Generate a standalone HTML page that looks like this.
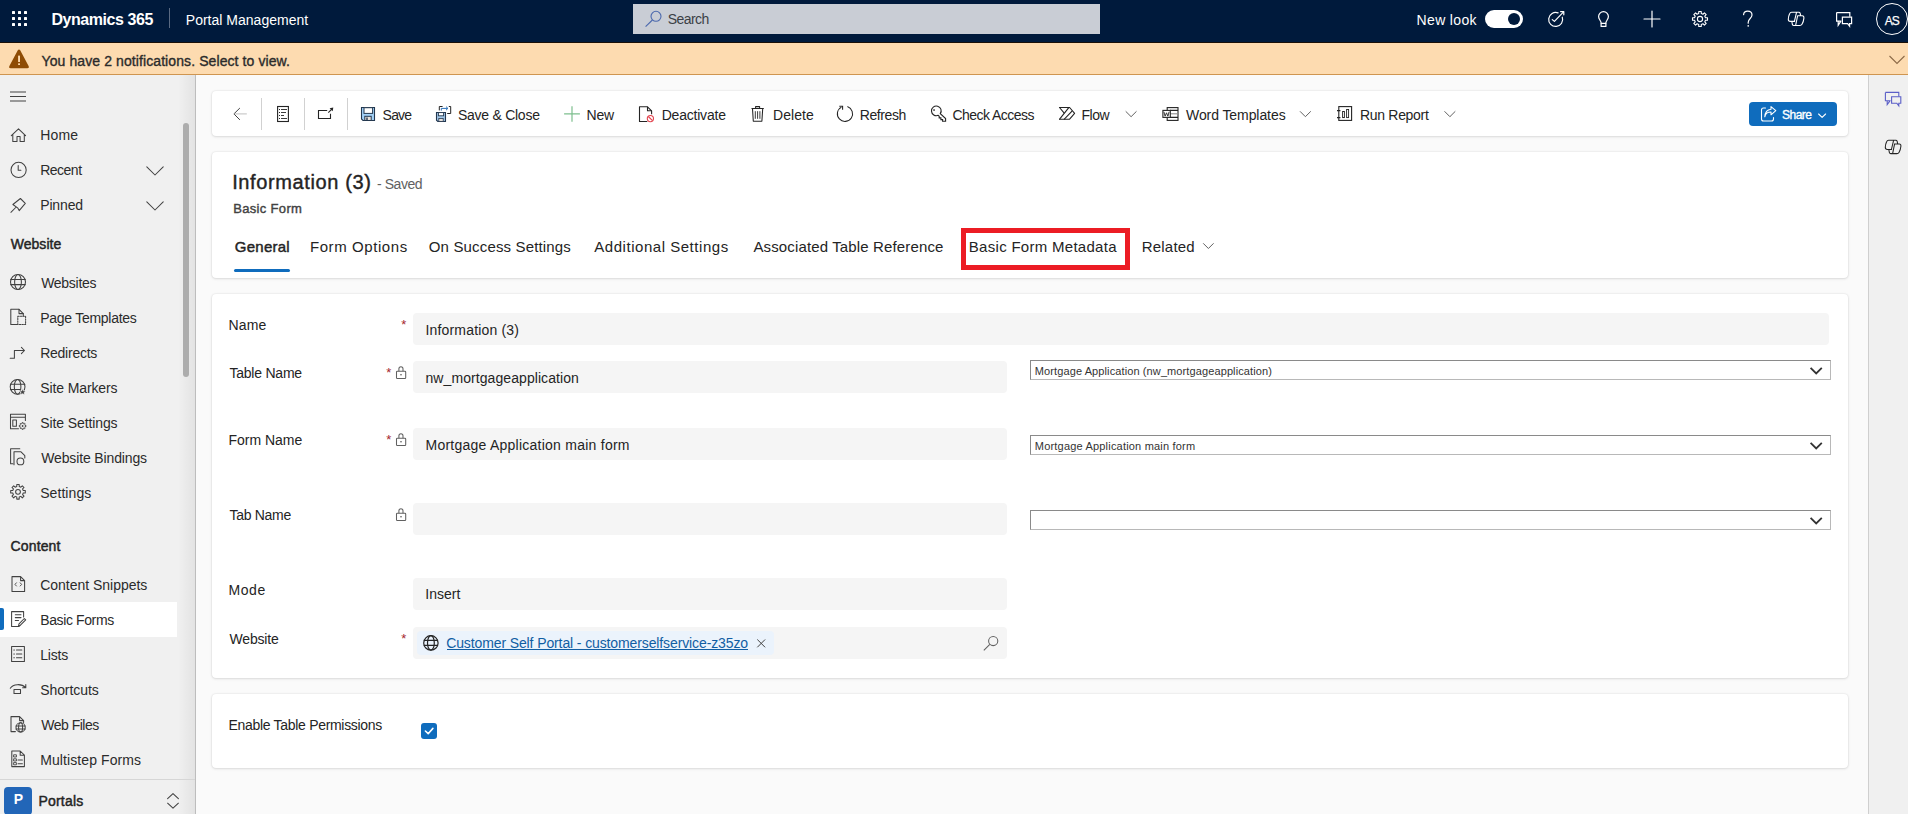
<!DOCTYPE html>
<html><head><meta charset="utf-8"><title>Portal Management</title>
<style>
html,body{margin:0;padding:0;}
body{width:1908px;height:814px;overflow:hidden;position:relative;background:#fafafa;font-family:"Liberation Sans",sans-serif;}
.t{position:absolute;white-space:nowrap;line-height:1;font-family:"Liberation Sans",sans-serif;}
.b{position:absolute;box-sizing:border-box;}
#hdr{left:0;top:0;width:1908px;height:42px;background:#001a3c;}
#hdrline{left:0;top:42px;width:1908px;height:1px;background:#1a0f08;}
#notif{left:0;top:43px;width:1908px;height:32px;background:#fddbb0;border-bottom:1px solid #cf9550;}
#side{left:0;top:75px;width:196px;height:739px;background:#f0f0f0;border-right:1px solid #bdbdbd;}
#sideshadow{left:178px;top:75px;width:17px;height:739px;background:linear-gradient(to right,rgba(0,0,0,0),rgba(0,0,0,0.055));}
#rpanel{left:1868px;top:75px;width:40px;height:739px;background:#f0f0f0;border-left:1px solid #cfcfcf;}
.card{position:absolute;left:212px;width:1636px;background:#fff;border-radius:4px;box-shadow:0 0 2px rgba(0,0,0,0.12),0 1px 3px rgba(0,0,0,0.10);}
.inp{position:absolute;left:413px;height:32px;background:#f5f5f5;border-radius:4px;}
.sel{position:absolute;left:1030px;width:801px;height:20px;background:#fff;border:1px solid #8a8a8a;border-bottom-color:#b8b8b8;border-right-color:#b8b8b8;box-sizing:border-box;}

</style></head>
<body>
<div id="hdr" class="b"></div>
<div class="b" style="left:169px;top:8px;width:1px;height:20px;background:#5a6a82;"></div>
<div class="b" style="left:633px;top:4px;width:467px;height:30px;background:#c9cdd5;"></div>
<div class="b" style="left:1485px;top:10px;width:38px;height:18px;border-radius:9px;background:#fff;"></div>
<div class="b" style="left:1508px;top:13px;width:12px;height:12px;border-radius:6px;background:#001a3c;"></div>
<div class="b" style="left:1876px;top:3px;width:32px;height:32px;border-radius:16px;border:1px solid #fff;"></div>

<div id="notif" class="b"></div>
<div id="hdrline" class="b"></div>

<div id="side" class="b"></div>
<div id="sideshadow" class="b"></div>
<div class="b" style="left:183px;top:123px;width:6px;height:254px;border-radius:3px;background:#adadad;"></div>
<div class="b" style="left:0;top:602px;width:177px;height:35px;background:#fff;"></div>
<div class="b" style="left:0;top:608px;width:4px;height:22px;border-radius:0 2px 2px 0;background:#0f6cbd;"></div>
<div class="b" style="left:0;top:779px;width:195px;height:1px;background:#d6d6d6;"></div>
<div class="b" style="left:4px;top:787px;width:28px;height:28px;border-radius:4px;background:#2266b8;"></div>

<div id="rpanel" class="b"></div>

<div class="card" style="top:91px;height:45px;"></div>
<div class="card" style="top:152px;height:126px;"></div>
<div class="card" style="top:294px;height:384px;"></div>
<div class="card" style="top:694px;height:74px;"></div>

<div class="b" style="left:1749px;top:102px;width:88px;height:24px;border-radius:4px;background:#0f6cbd;"></div>
<div class="b" style="left:234px;top:269px;width:56px;height:3px;border-radius:2px;background:#0f6cbd;"></div>
<div class="b" style="left:961px;top:228px;width:169px;height:42px;border:5px solid #ec1c24;"></div>

<div class="inp" style="top:313px;width:1416px;"></div>
<div class="inp" style="top:361px;width:594px;"></div>
<div class="inp" style="top:428px;width:594px;"></div>
<div class="inp" style="top:503px;width:594px;"></div>
<div class="inp" style="top:578px;width:594px;"></div>
<div class="inp" style="top:627px;width:594px;"></div>
<div class="b" style="left:417px;top:631px;width:357px;height:24px;border-radius:4px;background:#ebf3fc;"></div>
<div class="sel" style="top:360px;"></div>
<div class="sel" style="top:435px;"></div>
<div class="sel" style="top:510px;"></div>
<div class="b" style="left:447px;top:649px;width:301px;height:1px;background:#115ea3;"></div>
<div class="b" style="left:421px;top:723px;width:16px;height:16px;border-radius:3px;background:#0f6cbd;"></div>

<svg class="b" style="left:0;top:0" width="1908" height="814" viewBox="0 0 1908 814" fill="none">
<!-- waffle -->
<g fill="#fff"><rect x="12" y="11" width="3" height="3" rx="0.6"/><rect x="18" y="11" width="3" height="3" rx="0.6"/><rect x="24" y="11" width="3" height="3" rx="0.6"/><rect x="12" y="17" width="3" height="3" rx="0.6"/><rect x="18" y="17" width="3" height="3" rx="0.6"/><rect x="24" y="17" width="3" height="3" rx="0.6"/><rect x="12" y="23" width="3" height="3" rx="0.6"/><rect x="18" y="23" width="3" height="3" rx="0.6"/><rect x="24" y="23" width="3" height="3" rx="0.6"/></g>
<!-- search icon -->
<g stroke="#4b68ad" stroke-width="1.1"><circle cx="656" cy="16.3" r="5"/><path d="M652.4 20 L645.6 26.6"/></g>
<!-- header icons -->
<g stroke="#fff" stroke-width="1.2" stroke-linecap="round" stroke-linejoin="round">
<path d="M1562.3 17.2 A7 7 0 1 1 1558.1 12.9"/>
<path d="M1552.3 19.6 L1554.4 21.4 L1563.3 12.2"/>
<path d="M1560.6 11.6 L1563.8 11.6 L1563.8 14.8" />
<path d="M1598.6 16.6 A4.9 4.9 0 0 1 1608.4 16.6 C1608.4 19.4 1606.2 20.6 1605.9 22.6 L1605.9 26.4 L1601.1 26.4 L1601.1 22.6 C1600.8 20.6 1598.6 19.4 1598.6 16.6 Z"/>
<path d="M1601.3 23.4 L1605.7 23.4"/>
<path d="M1652 11 L1652 27 M1644 19 L1660 19"/>
<path d="M1743.6 14.6 C1743.8 12.4 1745.6 11.2 1747.7 11.2 C1750.1 11.2 1752 12.8 1752 15.1 C1752 18.4 1748.2 18.6 1748.2 22.4 L1748.2 23.2"/>
</g>
<circle cx="1748.2" cy="25.9" r="0.8" fill="#fff"/>
<g stroke="#fff" stroke-width="1.1" stroke-linejoin="round">
<path d="M1698.75 11.50 L1701.25 11.50 L1701.26 13.54 L1702.96 14.25 L1704.42 12.82 L1706.18 14.58 L1704.75 16.04 L1705.46 17.74 L1707.50 17.75 L1707.50 20.25 L1705.46 20.26 L1704.75 21.96 L1706.18 23.42 L1704.42 25.18 L1702.96 23.75 L1701.26 24.46 L1701.25 26.50 L1698.75 26.50 L1698.74 24.46 L1697.04 23.75 L1695.58 25.18 L1693.82 23.42 L1695.25 21.96 L1694.54 20.26 L1692.50 20.25 L1692.50 17.75 L1694.54 17.74 L1695.25 16.04 L1693.82 14.58 L1695.58 12.82 L1697.04 14.25 L1698.74 13.54 Z"/>
<circle cx="1700" cy="19" r="2.6"/>
</g>
<g stroke="#fff" stroke-width="1.1" fill="none" stroke-linejoin="round" stroke-linecap="round" transform="translate(-97 -128.1)"><use href="#copi"/></g>
<g stroke="#fff" stroke-width="1.2" stroke-linejoin="miter">
<path d="M1836.6 12.6 L1849.8 12.6 L1849.8 16.8 M1841.4 21.2 L1836.6 21.2 L1836.6 12.6 M1838.2 21.2 L1838.2 25.2 L1840.6 21.6"/>
<path d="M1842.4 17.2 L1851.6 17.2 L1851.6 23.6 L1849.6 23.6 L1849.6 26.2 L1847.6 23.6 L1842.4 23.6 Z"/>
</g>
<!-- notif warning -->
<path d="M17.8 50.2 C18.4 49.2 19.6 49.2 20.2 50.2 L28.6 65.9 C29.3 67.2 28.7 68.2 27.3 68.2 L10.7 68.2 C9.3 68.2 8.7 67.2 9.4 65.9 Z" fill="#8e4c05"/>
<rect x="18.1" y="55.6" width="1.9" height="6.4" rx="0.6" fill="#fddbb0"/>
<rect x="18.1" y="63.2" width="1.9" height="1.9" rx="0.6" fill="#fddbb0"/>
<path d="M1889.5 56 L1897 63.5 L1904.5 56" stroke="#8c6a48" stroke-width="1.1"/>

<!-- ===== command bar ===== -->
<g stroke="#424242" stroke-width="1" stroke-linecap="round" stroke-linejoin="round">
<path d="M239.6 108.3 L233.9 113.9 L239.6 119.6"/>
</g>
<path d="M234.5 113.9 L246.8 113.9" stroke="#c4c4c4" stroke-width="1.1"/>
<g fill="#d1d1d1"><rect x="261" y="98" width="1" height="32"/><rect x="304" y="98" width="1" height="32"/><rect x="347" y="98" width="1" height="32"/></g>
<g stroke="#242424" stroke-width="1.1" fill="none">
<rect x="277.6" y="106.5" width="10.8" height="15"/>
<path d="M281 109.5 L287 109.5 M281 112.5 L286 112.5 M281 115.5 L284 115.5 M281 118.5 L287 118.5" stroke-width="0.9"/>
</g>
<g fill="#242424"><rect x="279" y="109" width="1" height="1"/><rect x="279" y="112" width="1" height="1"/><rect x="279" y="115" width="1" height="1"/><rect x="279" y="118" width="1" height="1"/></g>
<g stroke="#242424" stroke-width="1.1" fill="none" stroke-linejoin="miter">
<path d="M327.2 110.5 L318.5 110.5 L318.5 118.5 L330.5 118.5 L330.5 113.8"/>
<path d="M328.3 112.6 L332.3 108.6"/>
</g>
<path d="M329.6 108.2 L333.3 107.6 L332.7 111.3 Z" fill="#242424"/>
<!-- save -->
<path d="M361.5 107.5 L374.5 107.5 L374.5 120.5 L363 120.5 L361.5 119 Z" fill="#a3d1f7" stroke="#24384f" stroke-width="1.1"/>
<rect x="364" y="107.7" width="8.6" height="5.7" fill="#fff" stroke="#24384f" stroke-width="1"/>
<rect x="364.8" y="116.3" width="6.4" height="4.2" fill="#e8e2dc" stroke="#24384f" stroke-width="1"/>
<rect x="366.3" y="117.5" width="1.4" height="3" fill="#24384f"/>
<!-- save & close -->
<path d="M436.5 112.5 L445.5 112.5 L445.5 121.5 L437.8 121.5 L436.5 120.2 Z" fill="#a3c6e6" stroke="#24384f" stroke-width="1.1"/>
<rect x="438.4" y="112.6" width="5.2" height="3.2" fill="#fff" stroke="#24384f" stroke-width="0.9"/>
<rect x="438.8" y="118.4" width="4.4" height="3" fill="#e8e2dc" stroke="#24384f" stroke-width="0.8"/>
<g stroke="#242424" stroke-width="1" fill="none"><path d="M439.3 110.4 L439.3 106.5 L442.6 106.5 M448.8 106.5 L450.7 106.5 L450.7 113.5 L447.2 113.5"/></g>
<g stroke="#2a6fb8" stroke-width="1" fill="none"><path d="M441.3 110.6 L441.3 108.4 L447.6 108.4"/><path d="M446 106.6 L447.9 108.4 L446 110.2"/></g>
<!-- new plus -->
<path d="M572 106.3 L572 121.8 M564.1 113.9 L579.9 113.9" stroke="#7dbf8e" stroke-width="1.2"/>
<!-- deactivate -->
<g stroke="#242424" stroke-width="1.1" fill="none" stroke-linejoin="round">
<path d="M647.3 121.5 L639.5 121.5 L639.5 106.8 L647.5 106.8 L651.6 110.8 L651.6 114.2"/>
<path d="M647.5 106.8 L647.5 110.8 L651.6 110.8"/>
</g>
<circle cx="650.4" cy="118.6" r="3.1" stroke="#e3434e" stroke-width="1.1" fill="#fff"/>
<path d="M648.3 116.5 L652.5 120.7" stroke="#e3434e" stroke-width="1.1"/>
<!-- delete -->
<g stroke="#242424" stroke-width="1.05" fill="none" stroke-linejoin="round">
<path d="M751.5 108.5 L763.8 108.5"/>
<path d="M755.6 108.3 L755.6 106.6 L759.6 106.6 L759.6 108.3"/>
<path d="M752.5 108.6 L753.3 121.3 L761.9 121.3 L762.7 108.6"/>
<path d="M755.3 111.2 L755.3 118.8 M757.6 111.2 L757.6 118.8 M759.9 111.2 L759.9 118.8" stroke-width="0.9"/>
</g>
<!-- refresh -->
<g stroke="#242424" stroke-width="1.05" fill="none">
<path d="M847.4 106.6 A7.6 7.6 0 1 1 841.4 107.1"/>
<path d="M839.3 106.3 L842.6 106.3 L842.6 109.8"/>
</g>
<!-- key -->
<g stroke="#242424" stroke-width="1.1" fill="none" stroke-linejoin="miter">
<path d="M938.2 115.3 A4.85 4.85 0 1 1 940.3 113.6 L945.6 118.6 L945.6 121.3 L942.6 121.3 L942.6 119.6 L940.9 119.6 L940.9 117.9 L939.2 117.9 L939.2 116.3 Z"/>
</g>
<rect x="933.3" y="109.3" width="1.5" height="1.5" fill="#242424"/>
<!-- flow -->
<g stroke="#242424" stroke-width="1.1" fill="none" stroke-linejoin="round" stroke-linecap="round">
<path d="M1059.5 107.5 L1069.6 107.5 L1074.6 113.4 L1069.4 119.3 L1059.6 119.3 M1059.5 107.5 L1064 112.8"/>
<path d="M1068.8 107.7 L1059.6 119.1 M1071.8 111.4 L1064.3 119.2"/>
</g>
<!-- chevrons -->
<g stroke="#616161" stroke-width="1" fill="none" stroke-linejoin="round">
<path d="M1125.7 111.3 L1131.1 116.7 L1136.5 111.3"/>
<path d="M1300 111.3 L1305.4 116.7 L1310.8 111.3"/>
<path d="M1444.5 111.3 L1449.9 116.7 L1455.3 111.3"/>
<path d="M1203.2 243.3 L1208.4 248.5 L1213.6 243.3"/>
</g>
<!-- word -->
<g stroke="#242424" stroke-width="1.1" fill="none">
<rect x="1167.2" y="107.6" width="10.8" height="12.8"/>
<path d="M1170 113.8 L1178 113.8" stroke="#8a8a8a"/>
</g>
<rect x="1162.9" y="110.4" width="7.4" height="7" fill="#fff" stroke="#242424" stroke-width="1.1"/>
<path d="M1170 110.4 L1178 110.4 M1170 117.4 L1178 117.4" stroke="#242424" stroke-width="1.1"/>
<path d="M1163.9 111.8 L1165.1 116.2 L1166.5 112.8 L1167.9 116.2 L1169.1 111.8" stroke="#242424" stroke-width="0.9" fill="none"/>
<!-- run report -->
<g stroke="#242424" stroke-width="1.1" fill="none">
<rect x="1338.8" y="106.6" width="12.8" height="13.8"/>
<path d="M1337 110.6 L1340.4 110.6 M1337 117.6 L1340.4 117.6"/>
<rect x="1342.6" y="111.5" width="1.8" height="6.1" stroke-width="0.9"/>
<rect x="1346.6" y="109.5" width="2" height="8.1" stroke-width="0.9"/>
</g>
<!-- share button -->
<g stroke="#fff" stroke-width="1.1" fill="none" stroke-linejoin="round" stroke-linecap="round">
<path d="M1765.5 108 L1763.5 108 C1762.2 108 1761.5 108.7 1761.5 110 L1761.5 119 C1761.5 120.3 1762.2 121 1763.5 121 L1771.5 121 C1772.8 121 1773.5 120.3 1773.5 119 L1773.5 117.5"/>
<path d="M1764.8 116.8 C1765.4 113.6 1767.8 112 1771 112 L1771 114.8 L1775.8 110.6 L1771 106.6 L1771 109.2 C1767.2 109.6 1765 112.6 1764.8 116.8 Z"/>
<path d="M1818.6 114 L1822.1 117.3 L1825.6 114"/>
</g>
<!-- ===== form ===== -->
<g fill="#a4262c">
<text x="401.2" y="328.8" font-family="Liberation Sans" font-size="13">*</text>
<text x="386.2" y="376.8" font-family="Liberation Sans" font-size="13">*</text>
<text x="386.2" y="443.8" font-family="Liberation Sans" font-size="13">*</text>
<text x="401.2" y="642.8" font-family="Liberation Sans" font-size="13">*</text>
</g>
<defs>
<g id="lock"><path d="M398.9 371.2 L398.9 368.8 A2.05 2.05 0 0 1 403 368.8 L403 371.2" stroke="#616161" stroke-width="1.05" fill="none"/><rect x="396.5" y="371.2" width="9.2" height="7.3" rx="0.8" stroke="#616161" stroke-width="1.05" fill="none"/><rect x="400.3" y="374" width="1.4" height="1.4" fill="#616161"/></g>
</defs>
<use href="#lock"/>
<use href="#lock" y="67"/>
<use href="#lock" y="142"/>
<g stroke="#333" stroke-width="1.8" fill="none" stroke-linejoin="miter">
<path d="M1810.6 367.8 L1816.2 373.4 L1821.8 367.8"/>
<path d="M1810.6 442.8 L1816.2 448.4 L1821.8 442.8"/>
<path d="M1810.6 517.8 L1816.2 523.4 L1821.8 517.8"/>
</g>
<g stroke="#242424" stroke-width="1.2" fill="none">
<circle cx="430.9" cy="642.9" r="7.2"/>
<ellipse cx="430.9" cy="642.9" rx="3.4" ry="7.2"/>
<path d="M423.8 640.3 L438 640.3 M423.8 645.4 L438 645.4"/>
</g>
<path d="M757.3 639.5 L765.1 647.3 M765.1 639.5 L757.3 647.3" stroke="#424242" stroke-width="1"/>
<g stroke="#616161" stroke-width="1.05" fill="none"><circle cx="993.2" cy="641" r="4.6"/><path d="M989.8 644.4 L983.8 650.4"/></g>
<path d="M425.4 731 L428.2 733.7 L432.9 728.4" stroke="#fff" stroke-width="1.6" fill="none" stroke-linecap="round" stroke-linejoin="round"/>
<!-- ===== sidebar ===== -->
<g stroke="#424242" stroke-width="1.1" fill="none">
<path d="M10 92 L26 92 M10 96.5 L26 96.5 M10 101 L26 101"/>
</g>
<g stroke="#424242" stroke-width="1.05" fill="none" stroke-linejoin="round" stroke-linecap="round">
<!-- home -->
<path d="M11.3 135.6 L18.5 128.8 L25.6 135.6 M12.8 134.4 L12.8 141.4 L17 141.4 L17 136.5 L20.1 136.5 L20.1 141.4 L24.3 141.4 L24.3 134.4"/>
<!-- clock -->
<circle cx="18.6" cy="169.9" r="7.6"/>
<path d="M18.2 165.6 L18.2 170.3 L20.9 170.3"/>
<!-- pin -->
<path d="M10.9 212.3 L15.7 207.5 M12.9 204.5 L20.4 198.5 L25.3 203.3 L19.2 210.6 L17.9 208.2 Z" />
<!-- chevrons -->
<path d="M146.8 166.8 L155 175 L163.2 166.8 M146.8 201.8 L155 210 L163.2 201.8"/>
<!-- websites globe -->
<circle cx="18" cy="282" r="7.5"/><ellipse cx="18" cy="282" rx="3.4" ry="7.5"/><path d="M10.7 279.5 L25.3 279.5 M10.7 284.6 L25.3 284.6"/>
<!-- page templates -->
<path d="M17.5 324.5 L10.8 324.5 L10.8 309.3 L19 309.3 L23.3 313.6 L23.3 316" />
<path d="M19 309.3 L19 313.6 L23.3 313.6"/>
<path d="M17.8 316.3 L25.6 316.3 L25.6 324.5 L17.8 324.5 Z" stroke-dasharray="1.4 1.2"/>
<!-- redirects -->
<path d="M10.2 358.3 L14.4 358.3 L14.4 350.5 L24.3 350.5 M21.4 347.4 L24.5 350.5 L21.4 353.6"/>
<!-- site markers -->
<circle cx="17.6" cy="386.8" r="7.4"/><ellipse cx="17.6" cy="386.8" rx="3.3" ry="7.4"/><path d="M10.4 384.3 L24.8 384.3 M10.4 389.4 L20 389.4"/>
<!-- site settings -->
<path d="M25.4 420.5 L25.4 414.3 L10.5 414.3 L10.5 428.7 L18.5 428.7 M10.5 417.3 L25.4 417.3"/>
<rect x="12.8" y="420" width="3.6" height="6.2"/>

<!-- website bindings -->
<path d="M12.8 463.8 L10.6 463.8 L10.6 448.8 L19.8 448.8 M14 464.8 L14 451.8 L21 451.8 L24.8 455.6 L24.8 458"/>
<circle cx="20.4" cy="461.4" r="3.4"/>
<!-- settings gear -->
<path d="M16.79 484.50 L19.21 484.50 L19.22 486.54 L20.86 487.22 L22.30 485.78 L24.02 487.50 L22.58 488.94 L23.26 490.58 L25.30 490.59 L25.30 493.01 L23.26 493.02 L22.58 494.66 L24.02 496.10 L22.30 497.82 L20.86 496.38 L19.22 497.06 L19.21 499.10 L16.79 499.10 L16.78 497.06 L15.14 496.38 L13.70 497.82 L11.98 496.10 L13.42 494.66 L12.74 493.02 L10.70 493.01 L10.70 490.59 L12.74 490.58 L13.42 488.94 L11.98 487.50 L13.70 485.78 L15.14 487.22 L16.78 486.54 Z"/>
<circle cx="18" cy="491.8" r="2.4"/>
<!-- content snippets -->
<path d="M12 591.4 L12 576.6 L20.6 576.6 L24.6 580.6 L24.6 591.4 Z M20.6 576.6 L20.6 580.6 L24.6 580.6"/>
<path d="M16.4 582.8 L15 584.4 L16.4 586 M20.2 582.8 L21.6 584.4 L20.2 586" stroke-width="0.9"/>
<!-- basic forms -->
<path d="M19 626.4 L11.6 626.4 L11.6 611.6 L23.6 611.6 L23.6 617"/>
<path d="M15.3 614.8 L21 614.8 M15.3 617.6 L21 617.6 M15.3 620.4 L18.5 620.4"/>
<path d="M18.4 626.5 L19 623.8 L24.3 618.5 L25.7 619.9 L20.4 625.2 Z"/>
<!-- lists -->
<rect x="11.6" y="646.4" width="12.8" height="15"/>
<path d="M16.5 650 L21.8 650 M16.5 653.9 L21.8 653.9 M16.5 657.8 L21.8 657.8 M13.8 650 L14.4 650 M13.8 653.9 L14.4 653.9 M13.8 657.8 L14.4 657.8"/>
<!-- shortcuts -->
<path d="M10.3 688.2 C13 684 21.5 683.2 25.6 687.6 M25.8 684.5 L25.8 687.8 L22.6 687.8"/>
<rect x="14" y="689.5" width="6.5" height="4"/>
<!-- web files -->
<path d="M15.4 731.6 L11 731.6 L11 716.6 L19.6 716.6 L23.6 720.6 L23.6 722.4 M19.6 716.6 L19.6 720.6 L23.6 720.6"/>
<circle cx="20.6" cy="727.4" r="4.6"/><ellipse cx="20.6" cy="727.4" rx="2" ry="4.6"/><path d="M16 725.9 L25.2 725.9 M16 729 L25.2 729"/>
<!-- multistep -->
<path d="M11.8 766.6 L11.8 751 L20.2 751 L24.4 755.2 L24.4 766.6 Z M20.2 751 L20.2 755.2 L24.4 755.2"/>
<rect x="14" y="754.8" width="2.4" height="2.2" stroke-width="0.9"/><rect x="14" y="758.8" width="2.4" height="2.2" stroke-width="0.9"/><rect x="14" y="762.6" width="2.4" height="2.2" stroke-width="0.9"/>
<path d="M18 759.9 L22.4 759.9 M18 763.7 L22.4 763.7" />
<!-- portals chevrons -->
<path d="M167.6 798.6 L173 793.6 L178.4 798.6 M167.6 803.2 L173 808.2 L178.4 803.2"/>
</g>
<path d="M22.60 388.60 L23.54 390.91 L26.02 391.09 L24.12 392.69 L24.72 395.11 L22.60 393.80 L20.48 395.11 L21.08 392.69 L19.18 391.09 L21.66 390.91 Z" fill="#424242" stroke="#f0f0f0" stroke-width="0.8"/>
<path d="M22.04 422.65 L23.16 422.65 L23.16 423.56 L23.92 423.88 L24.58 423.23 L25.37 424.02 L24.72 424.68 L25.04 425.44 L25.95 425.44 L25.95 426.56 L25.04 426.56 L24.72 427.32 L25.37 427.98 L24.58 428.77 L23.92 428.12 L23.16 428.44 L23.16 429.35 L22.04 429.35 L22.04 428.44 L21.28 428.12 L20.62 428.77 L19.83 427.98 L20.48 427.32 L20.16 426.56 L19.25 426.56 L19.25 425.44 L20.16 425.44 L20.48 424.68 L19.83 424.02 L20.62 423.23 L21.28 423.88 L22.04 423.56 Z" fill="#f0f0f0" stroke="#424242" stroke-width="0.9"/><circle cx="22.6" cy="426" r="0.9" fill="#424242"/>
<!-- ===== right panel ===== -->
<g stroke="#5b5fc7" stroke-width="1.1" fill="none" stroke-linejoin="miter">
<path d="M1885.4 92.4 L1898.8 92.4 L1898.8 96.6 M1890.6 100.8 L1885.4 100.8 L1885.4 92.4 M1887.2 100.8 L1887.2 104.6 L1889.8 101.2"/>
<path d="M1891.6 96.8 L1900.8 96.8 L1900.8 103.2 L1898.8 103.2 L1898.8 105.8 L1896.8 103.2 L1891.6 103.2 Z"/>
</g>
<g stroke="#242424" stroke-width="1.05" fill="none" stroke-linejoin="round" stroke-linecap="round"><g id="copi"><path d="M1893.6 140.3 L1888.6 140.3 Q1887.2 140.3 1886.6 141.8 Q1885.3 144.6 1885.3 147.3 Q1885.3 149.5 1887.3 149.5 L1891.6 149.5 M1893.6 140.3 L1891.4 149.5 M1893.6 140.3 L1895.9 140.3 Q1896.8 140.3 1897.1 141.2 L1897.7 143.9 M1894.6 143.9 L1899.3 143.9 Q1901 143.9 1900.9 146.2 Q1900.6 149.6 1899 152.4 Q1898.3 153.6 1896.8 153.6 L1892.6 153.6 M1894.6 143.9 L1892.6 153.6 M1892.6 153.6 L1890.8 153.6 Q1889.7 153.6 1889.4 152.6 L1888.8 149.5"/></g></g>
</svg>

<span class='t' style='left:51.40px;top:12.00px;font-size:16px;font-weight:700;color:#fff;letter-spacing:-0.436px;'>Dynamics 365</span>
<span class='t' style='left:185.80px;top:13.00px;font-size:14px;font-weight:400;color:#fff;letter-spacing:0.013px;'>Portal Management</span>
<span class='t' style='left:667.70px;top:12.00px;font-size:14px;font-weight:400;color:#3b3f46;letter-spacing:-0.540px;'>Search</span>
<span class='t' style='left:1416.60px;top:13.00px;font-size:14px;font-weight:400;color:#fff;letter-spacing:0.343px;'>New look</span>
<span class='t' style='left:1884.70px;top:14.50px;font-size:12px;font-weight:400;color:#fff;letter-spacing:-1.000px;-webkit-text-stroke:0.25px #fff;'>AS</span>
<span class='t' style='left:41.60px;top:54.00px;font-size:14px;font-weight:400;color:#2b2b2b;letter-spacing:0.092px;-webkit-text-stroke:0.35px #2b2b2b;'>You have 2 notifications. Select to view.</span>
<span class='t' style='left:382.60px;top:108.00px;font-size:14px;font-weight:400;color:#242424;letter-spacing:-0.800px;'>Save</span>
<span class='t' style='left:458.00px;top:108.00px;font-size:14px;font-weight:400;color:#242424;letter-spacing:-0.264px;'>Save &amp; Close</span>
<span class='t' style='left:586.60px;top:108.00px;font-size:14px;font-weight:400;color:#242424;letter-spacing:-0.250px;'>New</span>
<span class='t' style='left:661.70px;top:108.00px;font-size:14px;font-weight:400;color:#242424;letter-spacing:-0.211px;'>Deactivate</span>
<span class='t' style='left:773.00px;top:108.00px;font-size:14px;font-weight:400;color:#242424;letter-spacing:0.040px;'>Delete</span>
<span class='t' style='left:859.70px;top:108.00px;font-size:14px;font-weight:400;color:#242424;letter-spacing:-0.383px;'>Refresh</span>
<span class='t' style='left:952.50px;top:108.00px;font-size:14px;font-weight:400;color:#242424;letter-spacing:-0.545px;'>Check Access</span>
<span class='t' style='left:1081.60px;top:108.00px;font-size:14px;font-weight:400;color:#242424;letter-spacing:-0.533px;'>Flow</span>
<span class='t' style='left:1186.00px;top:108.00px;font-size:14px;font-weight:400;color:#242424;letter-spacing:-0.077px;'>Word Templates</span>
<span class='t' style='left:1360.00px;top:108.00px;font-size:14px;font-weight:400;color:#242424;letter-spacing:-0.311px;'>Run Report</span>
<span class='t' style='left:1782.00px;top:109.00px;font-size:12px;font-weight:400;color:#fff;letter-spacing:-0.500px;-webkit-text-stroke:0.35px #fff;'>Share</span>
<span class='t' style='left:232.20px;top:172.00px;font-size:20px;font-weight:400;color:#242424;letter-spacing:0.614px;-webkit-text-stroke:0.4px #242424;'>Information (3)</span>
<span class='t' style='left:377.00px;top:177.00px;font-size:14px;font-weight:400;color:#616161;letter-spacing:-0.433px;'>- Saved</span>
<span class='t' style='left:233.20px;top:202.00px;font-size:13px;font-weight:400;color:#424242;letter-spacing:0.333px;-webkit-text-stroke:0.4px #424242;'>Basic Form</span>
<span class='t' style='left:234.80px;top:239.00px;font-size:15px;font-weight:400;color:#242424;letter-spacing:0.250px;-webkit-text-stroke:0.45px #242424;'>General</span>
<span class='t' style='left:309.90px;top:239.00px;font-size:15px;font-weight:400;color:#242424;letter-spacing:0.582px;'>Form Options</span>
<span class='t' style='left:428.80px;top:239.00px;font-size:15px;font-weight:400;color:#242424;letter-spacing:0.156px;'>On Success Settings</span>
<span class='t' style='left:594.30px;top:239.00px;font-size:15px;font-weight:400;color:#242424;letter-spacing:0.533px;'>Additional Settings</span>
<span class='t' style='left:753.40px;top:239.00px;font-size:15px;font-weight:400;color:#242424;letter-spacing:0.140px;'>Associated Table Reference</span>
<span class='t' style='left:968.80px;top:239.00px;font-size:15px;font-weight:400;color:#242424;letter-spacing:0.289px;'>Basic Form Metadata</span>
<span class='t' style='left:1141.70px;top:239.00px;font-size:15px;font-weight:400;color:#242424;letter-spacing:0.217px;'>Related</span>
<span class='t' style='left:228.50px;top:318.00px;font-size:14px;font-weight:400;color:#242424;letter-spacing:0.167px;'>Name</span>
<span class='t' style='left:229.50px;top:366.00px;font-size:14px;font-weight:400;color:#242424;letter-spacing:-0.233px;'>Table Name</span>
<span class='t' style='left:228.50px;top:433.00px;font-size:14px;font-weight:400;color:#242424;letter-spacing:-0.025px;'>Form Name</span>
<span class='t' style='left:229.50px;top:508.00px;font-size:14px;font-weight:400;color:#242424;letter-spacing:-0.300px;'>Tab Name</span>
<span class='t' style='left:228.50px;top:583.00px;font-size:14px;font-weight:400;color:#242424;letter-spacing:0.567px;'>Mode</span>
<span class='t' style='left:229.50px;top:632.00px;font-size:14px;font-weight:400;color:#242424;letter-spacing:-0.183px;'>Website</span>
<span class='t' style='left:228.50px;top:718.00px;font-size:14px;font-weight:400;color:#242424;letter-spacing:-0.304px;'>Enable Table Permissions</span>
<span class='t' style='left:425.50px;top:323.00px;font-size:14px;font-weight:400;color:#242424;letter-spacing:0.171px;'>Information (3)</span>
<span class='t' style='left:425.50px;top:371.00px;font-size:14px;font-weight:400;color:#242424;letter-spacing:0.076px;'>nw_mortgageapplication</span>
<span class='t' style='left:425.50px;top:438.00px;font-size:14px;font-weight:400;color:#242424;letter-spacing:0.245px;'>Mortgage Application main form</span>
<span class='t' style='left:425.30px;top:587.00px;font-size:14px;font-weight:400;color:#242424;letter-spacing:0.000px;'>Insert</span>
<span class='t' style='left:446.20px;top:635.50px;font-size:14px;font-weight:400;color:#115ea3;letter-spacing:-0.115px;'>Customer Self Portal - customerselfservice-z35zo</span>
<span class='t' style='left:1034.80px;top:366.00px;font-size:11px;font-weight:400;color:#333;letter-spacing:0.107px;'>Mortgage Application (nw_mortgageapplication)</span>
<span class='t' style='left:1034.80px;top:441.00px;font-size:11px;font-weight:400;color:#333;letter-spacing:0.193px;'>Mortgage Application main form</span>
<span class='t' style='left:40.20px;top:128.00px;font-size:14px;font-weight:400;color:#2b2b2b;letter-spacing:0.167px;'>Home</span>
<span class='t' style='left:40.20px;top:163.00px;font-size:14px;font-weight:400;color:#2b2b2b;letter-spacing:-0.500px;'>Recent</span>
<span class='t' style='left:40.20px;top:198.00px;font-size:14px;font-weight:400;color:#2b2b2b;letter-spacing:-0.140px;'>Pinned</span>
<span class='t' style='left:41.20px;top:276.00px;font-size:14px;font-weight:400;color:#2b2b2b;letter-spacing:-0.286px;'>Websites</span>
<span class='t' style='left:40.20px;top:311.00px;font-size:14px;font-weight:400;color:#2b2b2b;letter-spacing:-0.269px;'>Page Templates</span>
<span class='t' style='left:40.20px;top:346.00px;font-size:14px;font-weight:400;color:#2b2b2b;letter-spacing:-0.250px;'>Redirects</span>
<span class='t' style='left:40.20px;top:381.00px;font-size:14px;font-weight:400;color:#2b2b2b;letter-spacing:-0.109px;'>Site Markers</span>
<span class='t' style='left:40.20px;top:416.00px;font-size:14px;font-weight:400;color:#2b2b2b;letter-spacing:-0.100px;'>Site Settings</span>
<span class='t' style='left:41.20px;top:451.00px;font-size:14px;font-weight:400;color:#2b2b2b;letter-spacing:-0.133px;'>Website Bindings</span>
<span class='t' style='left:40.20px;top:486.00px;font-size:14px;font-weight:400;color:#2b2b2b;letter-spacing:0.071px;'>Settings</span>
<span class='t' style='left:40.20px;top:578.00px;font-size:14px;font-weight:400;color:#2b2b2b;letter-spacing:-0.020px;'>Content Snippets</span>
<span class='t' style='left:40.20px;top:613.00px;font-size:14px;font-weight:400;color:#2b2b2b;letter-spacing:-0.380px;'>Basic Forms</span>
<span class='t' style='left:40.20px;top:648.00px;font-size:14px;font-weight:400;color:#2b2b2b;letter-spacing:-0.175px;'>Lists</span>
<span class='t' style='left:40.20px;top:683.00px;font-size:14px;font-weight:400;color:#2b2b2b;letter-spacing:-0.075px;'>Shortcuts</span>
<span class='t' style='left:41.20px;top:718.00px;font-size:14px;font-weight:400;color:#2b2b2b;letter-spacing:-0.487px;'>Web Files</span>
<span class='t' style='left:40.20px;top:753.00px;font-size:14px;font-weight:400;color:#2b2b2b;letter-spacing:0.093px;'>Multistep Forms</span>
<span class='t' style='left:10.70px;top:237.00px;font-size:14px;font-weight:400;color:#242424;letter-spacing:0.050px;-webkit-text-stroke:0.45px #242424;'>Website</span>
<span class='t' style='left:10.50px;top:539.00px;font-size:14px;font-weight:400;color:#242424;letter-spacing:0.150px;-webkit-text-stroke:0.45px #242424;'>Content</span>
<span class='t' style='left:38.50px;top:794.00px;font-size:14px;font-weight:400;color:#242424;letter-spacing:0.183px;-webkit-text-stroke:0.45px #242424;'>Portals</span>
<span class='t' style='left:13.70px;top:792.00px;font-size:14px;font-weight:700;color:#fff;letter-spacing:0.000px;'>P</span>
</body></html>
